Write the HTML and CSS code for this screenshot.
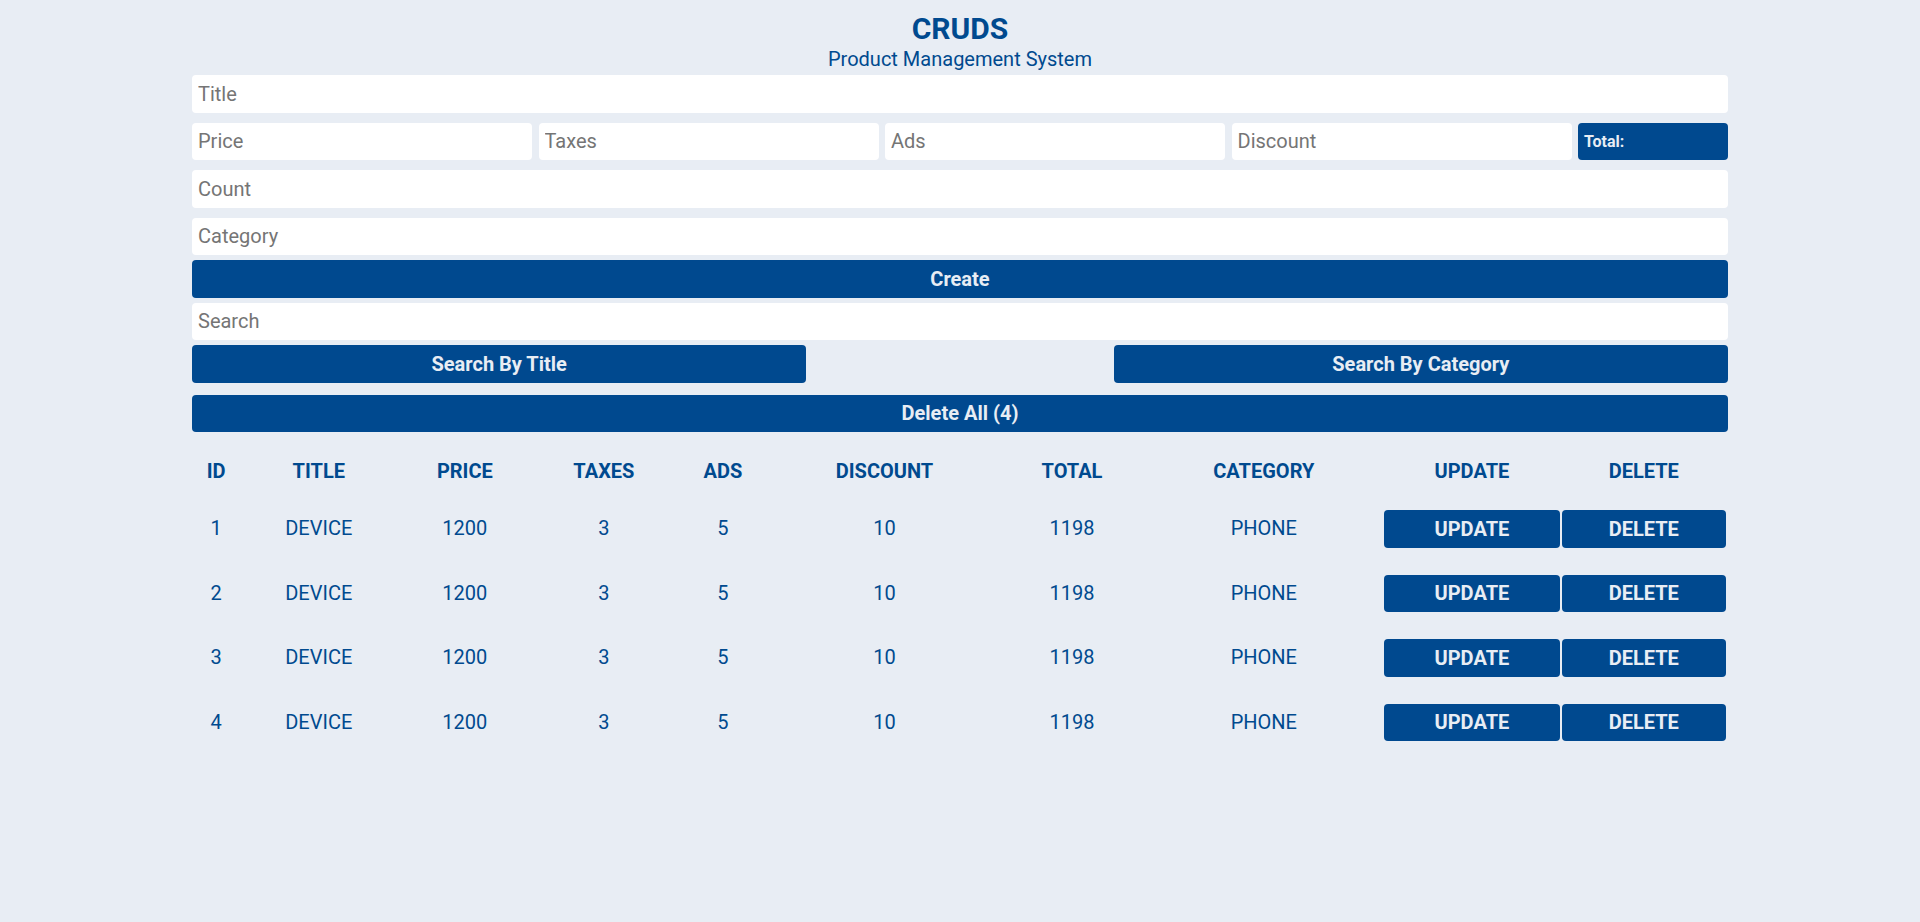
FILE: index.html
```html
<!DOCTYPE html>
<html lang="en">
<head>
<meta charset="UTF-8">
<title>CRUDS</title>
<link rel="stylesheet" href="styles.css">
</head>
<body>
<div class="crud">
  <header class="head">
    <h1 class="head-title">CRUDS</h1>
    <p class="head-sub">Product Management System</p>
  </header>
  <div class="inputs">
    <input class="field" type="text" placeholder="Title">
    <div class="price-row">
      <input class="field" type="number" placeholder="Price">
      <input class="field" type="number" placeholder="Taxes">
      <input class="field" type="number" placeholder="Ads">
      <input class="field" type="number" placeholder="Discount">
      <small class="total">Total:</small>
    </div>
    <input class="field" type="number" placeholder="Count">
    <input class="field field-cat" type="text" placeholder="Category">
    <button class="btn">Create</button>
  </div>
  <div class="search-block">
    <input class="field" type="text" placeholder="Search">
    <div class="search-btns">
      <button class="btn btn-half">Search By Title</button>
      <button class="btn btn-half">Search By Category</button>
    </div>
  </div>
  <div class="delete-all">
    <button class="btn">Delete All (4)</button>
  </div>
  <table class="table">
    <thead>
      <tr>
        <th>ID</th><th>TITLE</th><th>PRICE</th><th>TAXES</th><th>ADS</th><th>DISCOUNT</th><th>TOTAL</th><th>CATEGORY</th><th>UPDATE</th><th>DELETE</th>
      </tr>
    </thead>
    <tbody>
      <tr><td>1</td><td>DEVICE</td><td>1200</td><td>3</td><td>5</td><td>10</td><td>1198</td><td>PHONE</td><td><button class="btn btn-row">UPDATE</button></td><td><button class="btn btn-row">DELETE</button></td></tr>
      <tr><td>2</td><td>DEVICE</td><td>1200</td><td>3</td><td>5</td><td>10</td><td>1198</td><td>PHONE</td><td><button class="btn btn-row">UPDATE</button></td><td><button class="btn btn-row">DELETE</button></td></tr>
      <tr><td>3</td><td>DEVICE</td><td>1200</td><td>3</td><td>5</td><td>10</td><td>1198</td><td>PHONE</td><td><button class="btn btn-row">UPDATE</button></td><td><button class="btn btn-row">DELETE</button></td></tr>
      <tr><td>4</td><td>DEVICE</td><td>1200</td><td>3</td><td>5</td><td>10</td><td>1198</td><td>PHONE</td><td><button class="btn btn-row">UPDATE</button></td><td><button class="btn btn-row">DELETE</button></td></tr>
    </tbody>
  </table>
</div>
</body>
</html>
```
FILE: styles.css
```css
* {
  margin: 0;
  padding: 0;
  box-sizing: border-box;
}

html, body {
  background: #e8edf4;
}

body {
  font-family: Roboto, "Liberation Sans", Arial, sans-serif;
  color: #004a8f;
  padding-top: 10px;
}

.crud {
  width: 80%;
  margin: 0 auto;
}

.head {
  text-align: center;
  margin-bottom: 5px;
}

.head-title {
  font-size: 30px;
  font-weight: 700;
  line-height: 38px;
}

.head-sub {
  font-size: 20px;
  font-weight: 400;
  line-height: 22px;
}

.inputs {
  display: flex;
  flex-direction: column;
  gap: 10px;
}

.field {
  display: block;
  width: 100%;
  height: 37.5px;
  border: none;
  outline: none;
  border-radius: 4px;
  background: #fff;
  padding: 0 6px;
  font-family: Roboto, "Liberation Sans", Arial, sans-serif;
  font-size: 20px;
  color: #004a8f;
}

.field::placeholder {
  color: #757575;
}

.field::-webkit-outer-spin-button,
.field::-webkit-inner-spin-button {
  -webkit-appearance: none;
}

.price-row {
  display: flex;
  gap: 6.5px;
}

.price-row .field {
  flex: 1 1 0;
  min-width: 0;
}

.total {
  flex: 0 0 150px;
  height: 37.5px;
  background: #00498f;
  color: #e8edf4;
  border-radius: 4px;
  font-size: 16px;
  font-weight: 700;
  display: flex;
  align-items: center;
  padding: 0 6px;
}

.field-cat {
  margin-bottom: -5px;
}

.btn {
  display: block;
  width: 100%;
  height: 37.5px;
  border: none;
  border-radius: 4px;
  background: #00498f;
  color: #e8edf4;
  font-family: Roboto, "Liberation Sans", Arial, sans-serif;
  font-size: 20px;
  font-weight: 700;
  cursor: pointer;
}

.search-block {
  display: flex;
  flex-direction: column;
  gap: 5px;
  margin-top: 5px;
}

.search-btns {
  display: flex;
  justify-content: space-between;
}

.btn-half {
  width: 40%;
}

.delete-all {
  margin-top: 12px;
}

.table {
  width: 100%;
  margin-top: 13px;
  border-spacing: 2px;
  text-align: center;
}

.table th,
.table td {
  padding: 12.5px 0;
  font-size: 20px;
  line-height: 23.5px;
}

.table th {
  font-weight: 700;
}

.table td {
  font-weight: 400;
}

.btn-row {
  padding: 0;
}
```
